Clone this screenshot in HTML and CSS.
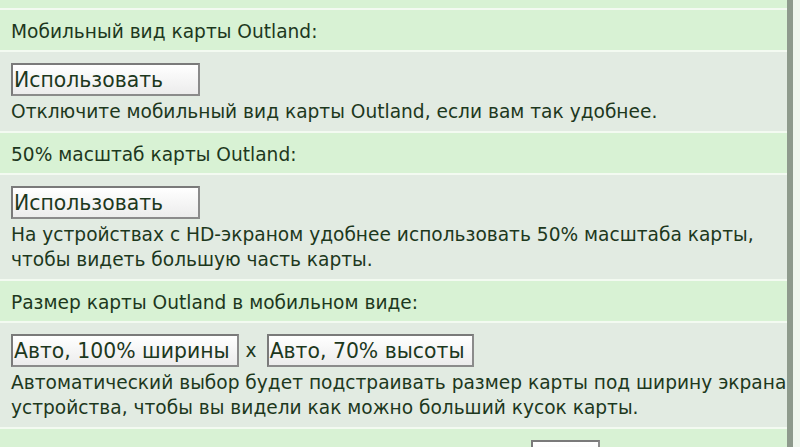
FILE: index.html
```html
<!DOCTYPE html>
<html lang="ru">
<head>
  <meta charset="UTF-8">
  <title>Настройки карты</title>
  <link rel="stylesheet" href="styles.css">
</head>
<body>

  <div class="settings">
    <div class="row head top"></div>

    <!-- мобильный вид -->
    <div class="row head">Мобильный вид карты Outland:</div>
    <div class="row body">
      <div class="controls">
        <button class="pick wide">Использовать</button>
      </div>
      <div class="hint">Отключите мобильный вид карты Outland, если вам так удобнее.</div>
    </div>

    <!-- масштаб 50% -->
    <div class="row head">50% масштаб карты Outland:</div>
    <div class="row body">
      <div class="controls">
        <button class="pick wide">Использовать</button>
      </div>
      <div class="hint">На устройствах с HD-экраном удобнее использовать 50% масштаба карты, чтобы видеть большую часть карты.</div>
    </div>

    <!-- размер карты -->
    <div class="row head">Размер карты Outland в мобильном виде:</div>
    <div class="row body">
      <div class="controls">
        <button class="pick">Авто, 100% ширины</button>
        <span class="times">x</span>
        <button class="pick">Авто, 70% высоты</button>
      </div>
      <div class="hint">Автоматический выбор будет подстраивать размер карты под ширину экрана устройства, чтобы вы видели как можно больший кусок карты.</div>
    </div>

    <div class="row head last">
      <button class="pick small"></button>
    </div>
  </div>

</body>
</html>
```

FILE: styles.css
```css
html, body {
  margin: 0;
  height: 100%;
  overflow: hidden;
}

body {
  font-family: "DejaVu Sans", Verdana, sans-serif;
  font-size: 18.6px;
  color: #1d381d;
  background-color: #f0f7ee;
}

.settings {
  width: 787px;
  min-height: 100%;
  display: flex;
  flex-direction: column;
  gap: 2px;
  background-color: #f3faf1;
  border-right: 6px solid #8e9a8c;
}

.row {
  padding: 0 0 0 11px;
}

.head {
  background-color: #d8f2d4;
  line-height: 24px;
  padding-top: 10px;
  padding-bottom: 6px;
}

.top {
  height: 8px;
  padding: 0;
}

.body {
  background-color: #e2ebe2;
  padding-top: 11px;
  padding-bottom: 7px;
}

.controls {
  display: flex;
  align-items: center;
  gap: 7px;
  margin-bottom: 3px;
}

.pick {
  height: 33px;
  padding: 0 7px 0 1px;
  font-family: inherit;
  font-size: 20.4px;
  color: #1d381d;
  text-align: left;
  background: linear-gradient(#ffffff, #ececec);
  border: 2px solid #8b8b8b;
  border-top-color: #7a7a7a;
  border-left-color: #7a7a7a;
  border-radius: 0;
}

.wide {
  width: 189px;
}

.times {
  margin-right: 3px;
}

.hint {
  line-height: 25px;
}

.last {
  flex: 1;
  padding-top: 11px;
}

.small {
  width: 69px;
  margin-left: 520px;
}
```
